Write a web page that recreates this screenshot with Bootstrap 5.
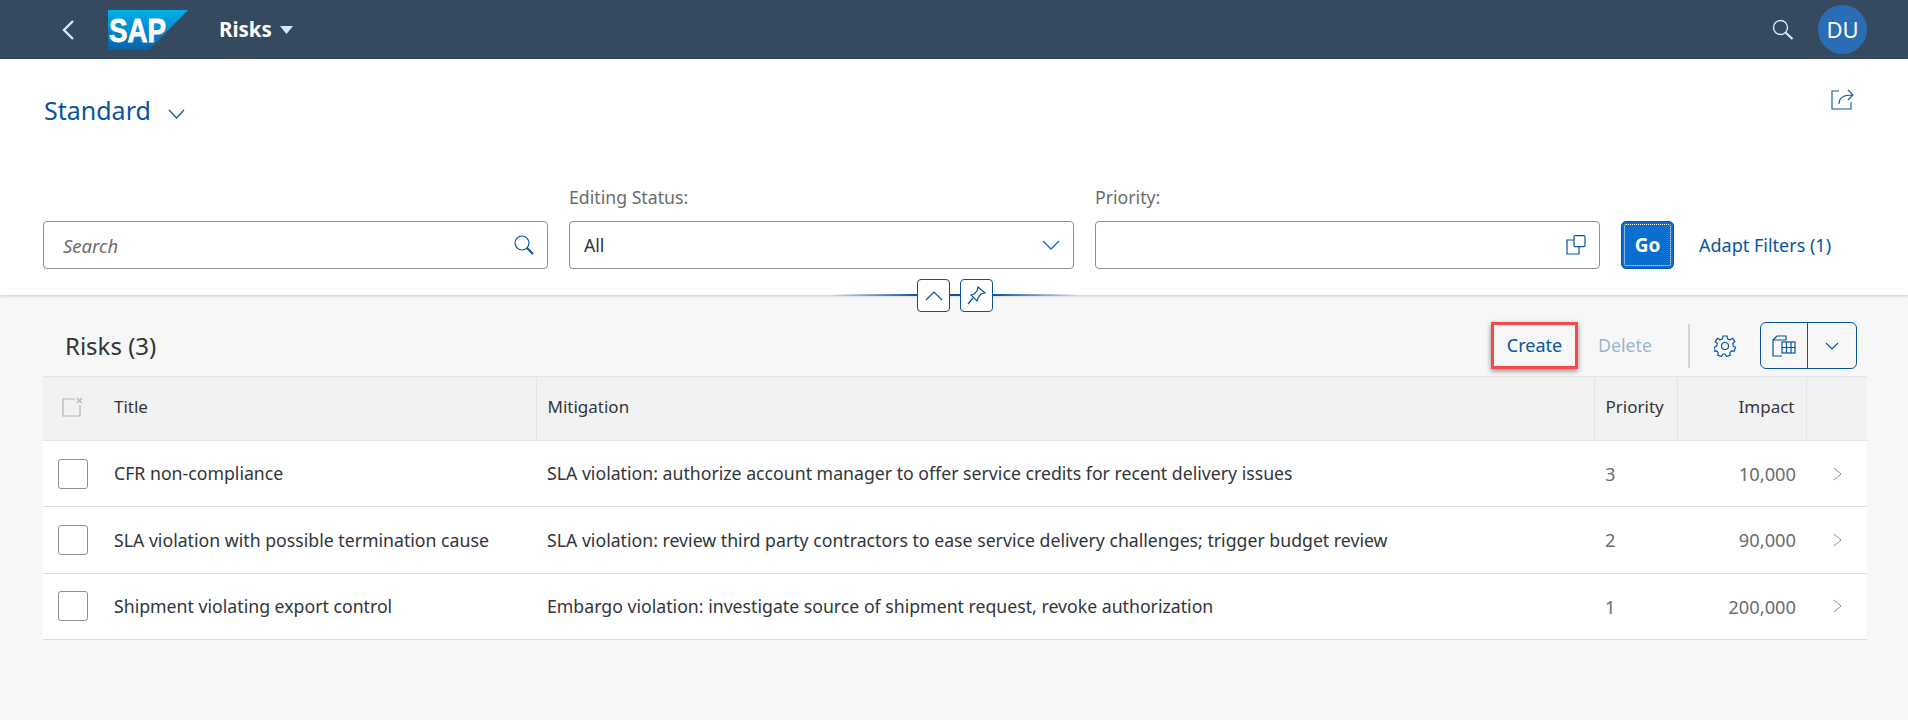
<!DOCTYPE html>
<html lang="en">
<head>
    <meta charset="UTF-8">
    <meta name="viewport" content="width=device-width, initial-scale=1.0">
    <title>Risks</title>
    <link rel="stylesheet" href="https://cdn.jsdelivr.net/npm/bootstrap@5.3.0/dist/css/bootstrap.min.css">
    <style>
        body { background-color: #f7f7f7; color: #32363a; font-family: "Noto Sans", "Liberation Sans", sans-serif; font-size: 17px; min-height: 720px; overflow: hidden; }
        svg { display: block; flex: none; }
        .shell-bar { height: 59px; background-color: #354a5f; padding: 0 41px 0 62px; }
        .shell-title { color: #fff; font-size: 20.5px; font-weight: 700; margin-left: 30px; }
        .sap-logo { margin-left: 34px; }
        .avatar { width: 49px; height: 49px; border-radius: 50%; background-color: #2a6db5; color: #fff; font-size: 22px; margin-left: 24px; }
        .filter-bar { position: relative; height: 236px; background-color: #fff; box-shadow: 0 1px 3px rgba(0,0,0,.2); padding: 29px 54px 0 43px; }
        .variant-name { color: #0854a0; font-size: 25px; line-height: 44px; margin: 0 0 0 1px; font-weight: 400; }
        .variant-arrow { margin-left: 17px; margin-top: 8px; }
        .share-icon { margin-top: 1px; }
        .filter-row { margin-top: 53px; }
        .filter-label { color: #6a6d70; font-size: 17.7px; line-height: 24px; margin-bottom: 12px; }
        .field-box { height: 48px; border: 1px solid #89919a; border-radius: 4px; background: #fff; padding: 0 13px 0 14px; }
        .field-box input { border: 0; padding: 0 0 0 5px; height: 100%; font-size: 18.5px; background: transparent; box-shadow: none; color: #32363a; }
        .field-box input::placeholder { font-style: italic; color: #6a6d70; }
        .field-text { font-size: 17.7px; }
        .filter-cell { width: 505px; margin-right: 21px; flex: none; }
        .btn-go { width: 53px; height: 48px; flex: none; background-color: #0a6ed1; border: 1px solid #0854a0; color: #fff; font-weight: 700; font-size: 19px; padding: 0; border-radius: 5px; outline: 1px dotted #fff; outline-offset: -4px; }
        .adapt-link { color: #0854a0; text-decoration: none; margin-left: 25px; line-height: 48px; font-size: 18px; white-space: nowrap; }
        .collapse-line { position: absolute; left: 830px; top: 235px; width: 250px; height: 2px; background: linear-gradient(90deg, rgba(8,84,160,0), #0854a0 35%, #0854a0 65%, rgba(8,84,160,0)); }
        .pin-btn { position: absolute; top: 220px; width: 33px; height: 33px; border: 1px solid #0854a0; border-radius: 4px; background: #fff; padding: 0; }
        .pin-up { left: 917px; }
        .pin-tack { left: 960px; }
        .table-bar { height: 81px; padding: 27px 51px 0 65px; }
        .table-title { font-size: 24px; font-weight: 400; margin: 0; line-height: 47px; }
        .tool-btn { background: transparent; border: 0; padding: 0; font-size: 18px; color: #0854a0; }
        .create-box { width: 87px; height: 47px; border: 3px solid #f44a4a; box-shadow: 0 2px 5px rgba(0,0,0,.45); }
        .delete-btn { color: #0854a0; opacity: .4; margin-left: 20px; width: 54px; font-size: 17.7px; }
        .tool-sep { width: 2px; height: 44px; background-color: #d4d4d4; margin: 0 24px 0 36px; }
        .split-btn { width: 97px; height: 47px; border: 1px solid #0854a0; border-radius: 6px; margin-left: 24px; }
        .split-btn > div { height: 100%; }
        .split-left { width: 47px; border-right: 1px solid #0854a0; }
        .risk-area { padding: 0 41px 0 43px; }
        .risk-table { table-layout: fixed; width: 1824px; margin: 0; --bs-table-bg: #fff; --bs-table-color: #32363a; }
        .risk-table th { background-color: #f2f2f2; height: 64px; font-weight: 400; color: #32363a; border-top: 1px solid #e5e5e5; border-bottom: 1px solid #e5e5e5; border-left: 1px solid #e5e5e5; padding: 0 11px 4px; vertical-align: middle; font-size: 17px; }
        .risk-table th.no-line { border-left: 0; }
        .risk-table td { height: 66.4px; padding: 0 11px; vertical-align: middle; border-bottom: 1px solid #e0e0e0; font-size: 17.7px; }
        .risk-table .num-cell { text-align: right; color: #6a6d70; font-size: 18.3px; padding-right: 10px; }
        .risk-table .prio-cell { color: #6a6d70; font-size: 18.3px; }
        .row-check { width: 30px; height: 30px; border: 1px solid #89919a; border-radius: 3px; background: #fff; margin-left: 4px; }
        .c-sel { width: 60px; } .c-title { width: 433px; } .c-mit { width: 1058px; } .c-prio { width: 83px; } .c-imp { width: 129px; } .c-nav { width: 61px; }
    </style>
</head>
<body>

    <header class="shell-bar d-flex align-items-center">
        <svg width="12" height="20" viewBox="0 0 12 20" fill="none" stroke="#d1e8ff" stroke-width="2.400"><path d="M11 1 2 10l9 9"/></svg>
        <svg class="sap-logo" width="81" height="40" viewBox="0 0 81 40">
            <defs><linearGradient id="sapFill" x1="0" y1="0" x2="0" y2="1"><stop offset="0" stop-color="#00b1eb"/><stop offset="1" stop-color="#0a60ac"/></linearGradient></defs>
            <polygon points="0,0 80,0 41,40 0,40" fill="url(#sapFill)"/>
            <text x="1" y="32" font-family="Liberation Sans" font-weight="700" font-size="33" fill="#fff" stroke="#fff" stroke-width=".8" textLength="57" lengthAdjust="spacingAndGlyphs">SAP</text>
        </svg>
        <span class="shell-title">Risks</span>
        <svg class="ms-2" width="13" height="8" viewBox="0 0 13 8"><polygon points="0,0 13,0 6.5,8" fill="#d1e8ff"/></svg>
        <svg class="ms-auto" width="22" height="21" viewBox="0 0 22 21" fill="none" stroke="#d1e8ff" stroke-width="1.4"><circle cx="8.5" cy="8.5" r="7"/><path d="M13.5 13.5 20.5 20" stroke-width="2.2"/></svg>
        <div class="avatar d-flex align-items-center justify-content-center">DU</div>
    </header>

    <section class="filter-bar">
        <div class="d-flex justify-content-between align-items-start">
            <div class="d-flex align-items-center">
                <h1 class="variant-name">Standard</h1>
                <svg class="variant-arrow" width="17" height="10" viewBox="0 0 17 10" fill="none" stroke="#0854a0" stroke-width="1.2"><path d="m1 1 7.500 8L16 1"/></svg>
            </div>
            <svg class="share-icon" width="23" height="21" viewBox="0 0 23 21" fill="none" stroke="#0854a0" stroke-width="1.1"><path d="M8 2H1v18h19v-7"/><path d="M8 15c0-6 4-9 13-9M17 1l5 5-5 5"/></svg>
        </div>
        <div class="filter-row d-flex align-items-end">
            <div class="filter-cell">
                <div class="field-box d-flex align-items-center">
                    <input class="form-control" type="text" placeholder="Search">
                    <svg width="20" height="20" viewBox="0 0 20 20" fill="none" stroke="#0854a0" stroke-width="1.2"><circle cx="8" cy="8" r="7"/><path d="M13 13l6 6" stroke-width="2"/></svg>
                </div>
            </div>
            <div class="filter-cell">
                <div class="filter-label">Editing Status:</div>
                <div class="field-box d-flex align-items-center justify-content-between">
                    <span class="field-text">All</span>
                    <svg width="18" height="10" viewBox="0 0 18 10" fill="none" stroke="#0a6ed1" stroke-width="1.3"><path d="m1 1 8 8 8-8"/></svg>
                </div>
            </div>
            <div class="filter-cell">
                <div class="filter-label">Priority:</div>
                <div class="field-box d-flex align-items-center justify-content-end">
                    <svg width="20" height="20" viewBox="0 0 20 20" fill="none" stroke="#0854a0" stroke-width="1.2"><rect x="8" y=".6" width="11" height="11" rx="1"/><path d="M8 5H1v14h12v-7"/></svg>
                </div>
            </div>
            <button class="btn-go" type="button">Go</button>
            <a class="adapt-link" href="#">Adapt Filters (1)</a>
        </div>
        <div class="collapse-line"></div>
        <button class="pin-btn pin-up d-flex align-items-center justify-content-center" type="button">
            <svg width="18" height="10" viewBox="0 0 18 10" fill="none" stroke="#0854a0" stroke-width="1.2"><path d="m1 9 8-8 8 8"/></svg>
        </button>
        <button class="pin-btn pin-tack d-flex align-items-center justify-content-center" type="button">
            <svg width="19" height="19" viewBox="0 0 19 19" fill="none" stroke="#0854a0" stroke-width="1.2"><path d="M11 1l7 6-4 1-3 4-1 3-6-6 3-1 3-3z"/><path d="M6 12l-5 6"/></svg>
        </button>
    </section>

    <section class="table-bar d-flex align-items-start">
        <h2 class="table-title">Risks (3)</h2>
        <div class="ms-auto d-flex align-items-center">
            <button class="tool-btn create-box" type="button">Create</button>
            <button class="tool-btn delete-btn" type="button">Delete</button>
            <div class="tool-sep"></div>
            <svg width="22" height="22" viewBox="0 0 22 22" fill="none" stroke="#0854a0" stroke-width="1.2"><circle cx="11" cy="11" r="3.500"/><path d="M9 1h4l.6 2.800 2.300 1 2.500-1.500 2.400 3.200-2 2 .4 2.500 2.300 1.300-1.200 3.800-2.800-.3-1.700 1.800.4 2.800-3.700 1-1.500-2.400h-2l-1.500 2.400-3.700-1 .4-2.800-1.700-1.800-2.800.3L.5 12.300l2.300-1.300.4-2.500-2-2 2.400-3.200 2.500 1.500 2.300-1z"/></svg>
            <div class="split-btn d-flex">
                <div class="split-left d-flex align-items-center justify-content-center">
                    <svg width="24" height="22" viewBox="0 0 24 22" fill="none" stroke="#0854a0" stroke-width="1.2"><path d="M5 1h9v4H1v0M5 1 1 5v16h9"/><rect x="10" y="7" width="13" height="11"/><path d="M10 12.500h13M14.500 7v11M19 7v11"/></svg>
                </div>
                <div class="flex-grow-1 d-flex align-items-center justify-content-center">
                    <svg width="14" height="8" viewBox="0 0 14 8" fill="none" stroke="#0854a0" stroke-width="1.1"><path d="m1 1 6 6 6-6"/></svg>
                </div>
            </div>
        </div>
    </section>

    <div class="risk-area">
        <table class="table risk-table">
            <colgroup>
                <col class="c-sel"><col class="c-title"><col class="c-mit"><col class="c-prio"><col class="c-imp"><col class="c-nav">
            </colgroup>
            <thead>
                <tr>
                    <th class="no-line">
                        <svg class="ms-2" width="22" height="20" viewBox="0 0 22 20" fill="none" stroke="#b5b5b5" stroke-width="1.200"><path d="M13 2H1v17h17V8"/><path d="m15 1 5 5m0-5-5 5"/></svg>
                    </th>
                    <th class="no-line">Title</th>
                    <th>Mitigation</th>
                    <th>Priority</th>
                    <th class="text-end">Impact</th>
                    <th></th>
                </tr>
            </thead>
            <tbody id="riskRows"></tbody>
        </table>
    </div>

    <script>
        const risks = [
            ["CFR non-compliance", "SLA violation: authorize account manager to offer service credits for recent delivery issues", "3", "10,000"],
            ["SLA violation with possible termination cause", "SLA violation: review third party contractors to ease service delivery challenges; trigger budget review", "2", "90,000"],
            ["Shipment violating export control", "Embargo violation: investigate source of shipment request, revoke authorization", "1", "200,000"]
        ];
        const chevron = '<svg class="ms-3" width="9" height="14" viewBox="0 0 9 14" fill="none" stroke="#8c8c8c" stroke-width="1"><path d="m1 1 7 6-7 6"/></svg>';
        document.getElementById("riskRows").innerHTML = risks.map(r =>
            `<tr><td><div class="row-check"></div></td><td>${r[0]}</td><td>${r[1]}</td><td class="prio-cell">${r[2]}</td><td class="num-cell">${r[3]}</td><td>${chevron}</td></tr>`
        ).join("");
    </script>
    <script src="https://cdn.jsdelivr.net/npm/bootstrap@5.3.0/dist/js/bootstrap.bundle.min.js"></script>
</body>
</html>
